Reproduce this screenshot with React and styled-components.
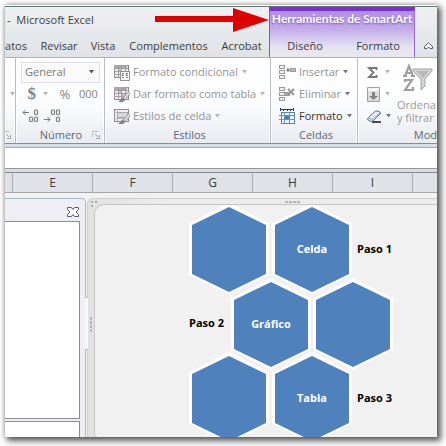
import React from "react";
import styled, { createGlobalStyle } from "styled-components";

const Global = createGlobalStyle`
  * { box-sizing: border-box; }
  html, body { margin: 0; background: #fdfdfd; }
  body { overflow: hidden; font: 12px/16px "Open Sans", "Noto Sans", sans-serif; color: #3c3c3c; }
  button, select { font: inherit; color: inherit; border: 0; background: none; padding: 0; margin: 0; white-space: nowrap; }
  h1, h2, p { margin: 0; font: inherit; }
  svg { display: block; flex: none; }
`;

const Window = styled.main`
  position: relative;
  display: flex;
  flex-direction: column;
  height: calc(100vh - 14px);
  margin: 5px 9px 9px 5px;
  overflow: hidden;
  background: #f1f1f1;
  border-top: 1px solid #fff;
`;

const Shade = styled.div`
  display: flow-root;
  &::before {
    content: "";
    position: fixed;
    inset: 5px 9px 9px 5px;
    box-shadow: 0 0 5px rgba(0, 0, 0, 0.3), 3px 3px 6px 1px rgba(0, 0, 0, 0.6);
  }
`;

const Header = styled.header`
  display: flex;
  height: 52px;
  flex: none;
  border-top: 1px solid #5d7a70;
  border-bottom: 1px solid #adb2b8;
  background: linear-gradient(#eeeff2, #e5e8eb 60%, #dfe2e6);
`;

const Bar = styled.div`
  display: flex;
  flex-direction: column;
  justify-content: space-between;
  width: 264px;
  flex: none;
`;

const Title = styled.h1`
  padding: 5px 0 0 2px;
  white-space: pre;
  font-size: 11px;
`;

const Tabs = styled.nav`
  display: flex;
  padding-bottom: 3px;
`;

const Tab = styled.button`
  width: ${(p) => p.$w}px;
  flex: none;
  height: 16px;
  display: flex;
  justify-content: center;
  font-size: 11px;
`;

const Context = styled.div`
  display: flex;
  flex-direction: column;
  justify-content: space-between;
  width: 146px;
  flex: none;
  border-top: 4px solid #7a2fd0;
  border-left: 1px solid #8b50d6;
  border-right: 1px solid #9a68da;
  background: linear-gradient(#b08ee2, #c3acea 40%, #e5e2f0 78%, #e8e9ee);
`;

const ContextTitle = styled.h2`
  text-align: center;
  color: #fff;
  font-family: Lato, sans-serif;
  font-size: 12px;
  line-height: 15px;
  font-weight: 700;
  white-space: nowrap;
  text-shadow: 0 1px 2px #7650ae;
`;

const Collapse = styled.button`
  flex: 1;
  display: flex;
  align-items: flex-end;
  justify-content: center;
  padding: 0 0 7px 4px;
`;

const Ribbon = styled.section`
  display: flex;
  height: 86px;
  flex: none;
  overflow: hidden;
  border-bottom: 1px solid #898d93;
  background: linear-gradient(#fff, #fbfcfd 55%, #e8ebf0);
`;

const Group = styled.section`
  display: flex;
  flex-direction: column;
  flex: none;
  width: ${(p) => p.$w}px;
  padding: 3px 4px 0 ${(p) => p.$pad || 4}px;
  border-right: 1px solid #b8bcc3;
  box-shadow: inset -1px 0 #fff, inset 1px 0 #fff;
  overflow: hidden;
`;

const LastGroup = styled(Group)`
  flex: 1;
  min-width: 0;
  padding-right: 0;
  border-right: 0;
  box-shadow: inset 1px 0 #fff;
`;

const Commands = styled.div`
  display: flex;
  flex-direction: column;
  height: 66px;
`;

const Line = styled.div`
  display: flex;
  align-items: center;
  height: 22px;
  gap: ${(p) => p.$gap || 0}px;
`;

const GroupName = styled.footer`
  position: relative;
  color: #5c6678;
  font-size: 11px;
  line-height: 15px;
  text-align: ${(p) => (p.$end ? "right" : "center")};
  white-space: nowrap;
`;

const Launcher = styled.button`
  position: absolute;
  right: 0;
  top: 4px;
`;

const Command = styled.button`
  display: flex;
  align-items: center;
  gap: 3px;
  height: 22px;
  font-size: 11px;
  color: ${(p) => (p.$on ? "#333" : "#949494")};
`;

const IconCommand = styled(Command)`
  width: 24px;
  justify-content: space-between;
`;

const Symbol = styled.button`
  width: ${(p) => p.$w}px;
  font-size: ${(p) => p.$size || 13}px;
  color: #858585;
  font-weight: ${(p) => (p.$bold ? 700 : 400)};
  font-family: ${(p) => (p.$serif ? '"Liberation Serif", serif' : "inherit")};
`;

const SelectBox = styled.label`
  display: flex;
  align-items: center;
  width: 80px;
  height: 21px;
  margin-left: -1px;
  padding-right: 4px;
  border: 1px solid #dfe1e6;
  background: #fafafb;
  color: #777;
`;

const Select = styled.select`
  appearance: none;
  flex: 1;
  min-width: 0;
  padding-left: 3px;
  font-size: 11px;
  outline: none;
`;

const Editing = styled.div`
  display: flex;
  gap: 6px;
`;

const Sort = styled.button`
  display: flex;
  flex-direction: column;
  align-items: flex-start;
  padding-top: 3px;
  color: #9b9b9b;
  font-size: 11px;
  line-height: 13px;
  text-align: left;
  > svg { margin: 0 0 6px 6px; }
`;

const Formula = styled.div`
  flex: none;
  height: 29px;
  padding: 3px 0 2px;
  background: #d9dde5;
  border-bottom: 1px solid #85898f;
`;

const FormulaInput = styled.input`
  display: block;
  width: 100%;
  height: 22px;
  padding: 0 4px;
  border: 0;
  border-top: 1px solid #a6aab0;
  border-bottom: 1px solid #95999f;
  border-radius: 0;
  background: #fff;
  font: inherit;
  outline: none;
`;

const Columns = styled.div`
  display: flex;
  flex: none;
  height: 20px;
  overflow: hidden;
  border-bottom: 1px solid #a3a7ac;
  background: #dfe2e7;
`;

const Column = styled.div`
  width: ${(p) => p.$w || 80}px;
  flex: none;
  border-right: 1px solid #a9adb2;
  text-align: center;
  line-height: 20px;
`;

const Sheet = styled.div`
  display: flex;
  flex: 1;
  min-height: 0;
  padding-top: 5px;
  gap: 1px;
`;

const Pane = styled.aside`
  display: flex;
  flex-direction: column;
  flex: none;
  width: 81px;
  padding-right: 5px;
  border: solid #a9bac3;
  border-width: 1px 1px 0 0;
  border-radius: 0 5px 0 0;
  background: #eeeef4;
`;

const PaneHead = styled.div`
  display: flex;
  align-items: center;
  justify-content: flex-end;
  height: 22px;
  padding: 3px 1px 0 0;
  flex: none;
`;

const PaneList = styled.div`
  flex: 1;
  background: #fff;
  border: solid #8b8b90;
  border-width: 1px 1px 1px 0;
`;

const PaneFoot = styled.div`
  height: 16px;
  margin-top: 2px;
  flex: none;
  background: #fff;
  border: solid #8b8b90;
  border-width: 1px 1px 0 0;
`;

const Frame = styled.section`
  position: relative;
  flex: 1;
  min-width: 0;
  padding: 5px 0 0 6px;
  border: solid #cfcfcf;
  border-width: 1px 0 0 1px;
  border-radius: 6px 0 0 0;
  background: linear-gradient(90deg, #e1e1e1, #ececec 80px);
`;

const Canvas = styled.div`
  position: relative;
  height: 100%;
  overflow: hidden;
  border: solid #c4c4c4;
  border-width: 1px 0 0 1px;
  border-radius: 10px 0 0 4px;
  background: #f1f1f1;
`;

const Node = styled.div`
  position: absolute;
  left: ${(p) => p.$x}px;
  top: ${(p) => p.$y}px;
  width: 80px;
  height: 92px;
  display: grid;
  place-items: center;
  > * { grid-area: 1 / 1; }
`;

const NodeText = styled.p`
  z-index: 1;
  color: #fff;
  font-size: 11px;
  font-weight: 700;
`;

const Step = styled.p`
  position: absolute;
  left: ${(p) => p.$x}px;
  top: ${(p) => p.$y}px;
  color: #000;
  font-size: 11px;
  font-weight: 700;
  white-space: nowrap;
`;

const Grip = styled.div`
  position: absolute;
  ${(p) => p.$place}
`;

const Pointer = styled.div`
  position: absolute;
  left: 150px;
  top: 2px;
`;

const Caret = ({ c = "#b5b5b5" }) => (
  <svg width="7" height="4" viewBox="0 0 7 4"><path d="M1 0h5L3.5 3.5z" fill={c} /></svg>
);

const Table = ({ kind }) => (
  <svg width="17" height="17" viewBox="0 0 17 17" shapeRendering="crispEdges">
    <path d="M1 1h14v12H1z" fill="#f0eef0" stroke="#8c888c" />
    {kind === "cell" ? (
      <>
        <path d="M1 4h14M1 10h14M4 1v12" stroke="#bcb9bc" />
        <path d="M4 4h10v5H4z" fill="#dad7da" stroke="#aaa7aa" />
      </>
    ) : (
      <>
        <path d="M1 1h13v3H1z" fill="#aaa6aa" />
        <path d="M1 4h14M1 7h14M1 10h14M5 1v12M8 1v12M12 1v12" stroke="#a19ea1" />
        <path d="M6 5h2v2H6zM9 8h3v2H9z" fill="#c9bec4" />
      </>
    )}
    {kind === "cond" ? (
      <>
        <path d="M7 7h9v9H7z" fill="#f7f7f7" stroke="#929292" />
        <path d="M11 9H9v2h2M9 13h2M15 9h-2v2h2M13 13h2" fill="none" stroke="#858585" />
      </>
    ) : (
      <g shapeRendering="auto">
        <path d="M15.5 5.5 10 12l2 2 5-6z" fill="#ddd" stroke="#8d8d8d" strokeWidth=".8" />
        <path d="M10 11.5c-2 0-2 3-5 4 3 1.500 7 .5 7-2z" fill="#858585" />
      </g>
    )}
  </svg>
);

const Cells = ({ kind }) => (
  <svg width="17" height="16" viewBox="0 0 17 16">
    <g shapeRendering="crispEdges" fill="#f0f0f0" stroke="#9b9b9b">
      <path d="M.5 1.500h5v3h-5zM.5 6.500h5v3h-5zM.5 11.500h5v3h-5z" />
      {kind === "insert" && <path d="M11.500 4.500h5v3h-5z" fill="#bbb" />}
      {kind === "delete" && <path d="M5.500 6.500h5v3h-5z" fill="#aaa" />}
    </g>
    {kind === "insert" ? (
      <path d="M7 6h4M9 4v4" stroke="#666" />
    ) : (
      <path d="m9 3 6 6m0-6L9 9" stroke="#999" strokeWidth="2" />
    )}
  </svg>
);

const FormatIcon = () => (
  <svg width="17" height="17" viewBox="0 0 17 17" shapeRendering="crispEdges">
    <path d="M1 1.500h14M1.500 0v3M14.500 0v3M4.500 1v2M8.500 1v2M11.500 1v2" stroke="#263955" />
    <path d="M2.500 4.500h13v11h-13z" fill="#f2f7ff" stroke="#5c7fae" />
    <path d="M0 7.500h16M0 11.500h16M5.500 4v12M10.500 4v12" stroke="#6f91bd" />
    <path d="M6 8h4v3H6z" fill="#2e80e8" />
  </svg>
);

const Decimal = ({ more }) => (
  <svg width="17" height="14" viewBox="0 0 17 14">
    <path d={more ? "M7 3.500H1m2.500-2.500L1 3.500 3.500 6" : "M0 10.500h6m-2.500-2.500L6 10.500 3.500 13"} fill="none" stroke="#777" />
    <g fill="none" stroke="#808080" strokeWidth="1.200">
      <rect x="12.500" y="1" width="3" height="4.500" rx="1" />
      <rect x="12.500" y="8" width="3" height="4.500" rx="1" />
      <rect x="7.500" y={more ? 8 : 1} width="3" height="4.500" rx="1" />
    </g>
  </svg>
);

const Launch = () => (
  <svg width="8" height="8" viewBox="0 0 8 8" fill="none" stroke="#b8bcc2">
    <path d="M.5 6V.5H6" />
    <path d="m3 3 3 3M7.500 4v3.500H4" stroke="#a5a5a8" />
  </svg>
);

const Fill = () => (
  <svg width="13" height="15" viewBox="0 0 13 15">
    <path d="M.5.5h12v14H.5z" fill="#dedede" stroke="#a0a0a0" />
    <path d="M1 1h11v3H1z" fill="#f4f4f4" />
    <path d="M5 5h3v4h3l-4.500 4L2 9h3z" fill="#828282" />
  </svg>
);

const Eraser = () => (
  <svg width="15" height="13" viewBox="0 0 15 13">
    <path d="M5 12h9" stroke="#111" strokeWidth="1.500" />
    <path d="M1 8 8 1.500q1-.8 2-.5l3 1q1 1 0 2L6 11q-1 1-2 .500L1 10q-1-1 0-2z" fill="#e4edfa" stroke="#56749f" />
    <path d="m1.500 8 4 1.500L13 3M5.500 9.500V11" fill="none" stroke="#8aa6cf" />
  </svg>
);

const Sigma = () => (
  <svg width="12" height="11" viewBox="0 0 12 11">
    <path d="M9.500 3V1H2l4.500 4.500L2 10h7.500V8" fill="none" stroke="#777" strokeWidth="1.800" />
  </svg>
);

const Filter = () => (
  <svg width="30" height="28" viewBox="0 0 30 28">
    <path d="M10 5h19v2l-7 8v7l-4 4V15l-8-8z" fill="#d6d6d6" stroke="#a3a3a3" />
    <path d="M13 7h13l-6 7z" fill="#bababa" />
    <g fill="none" stroke="#9f9f9f" strokeWidth="2.200">
      <path d="m2 12 4-10 4 10M3.500 9h5M0 12h4M8 12h4M2 18v-2h7L2 26h8v-3" />
    </g>
  </svg>
);

const Hexagon = () => (
  <svg width="80" height="92" viewBox="0 0 80 92">
    <path d="M40 0 80 20.500v51L40 92 0 71.500v-51z" fill="#fff" />
    <path d="M40 4 77 22v49L40 89 3 71V22z" fill="#4f81bd" />
  </svg>
);

const nodes = [
  [94, -2, ""], [177, -2, "Celda"], [136, 73, "Gráfico"],
  [218, 73, ""], [94, 147, ""], [177, 147, "Tabla"],
];
const steps = [[262, 36, "Paso 1"], [94, 110, "Paso 2"], [262, 185, "Paso 3"]];

export default function App() {
  return (
    <Shade>
      <Global />
      <Window>
        <Header>
          <Bar>
            <Title>{"-  Microsoft Excel"}</Title>
            <Tabs>
              <Tab $w={22}>atos</Tab>
              <Tab $w={64}>Revisar</Tab>
              <Tab $w={24}>Vista</Tab>
              <Tab $w={107}>Complementos</Tab>
              <Tab $w={39}>Acrobat</Tab>
            </Tabs>
          </Bar>
          <Context>
            <ContextTitle>Herramientas de SmartArt</ContextTitle>
            <Tabs>
              <Tab $w={70}>Diseño</Tab>
              <Tab $w={76}>Formato</Tab>
            </Tabs>
          </Context>
          <Collapse aria-label="Minimizar la cinta">
            <svg width="9" height="8" viewBox="0 0 9 8">
              <path d="M.5 4.500 4.500.8l4 3.700v2H6L4.500 5 3 6.500H.5z" fill="#fff" stroke="#555b65" />
            </svg>
          </Collapse>
        </Header>

        <Ribbon>
          <Group $w={11} $pad={0}>
            <Commands><Line /><Line><Caret /></Line></Commands>
            <GroupName>&nbsp;<Launcher aria-label="Alineación"><Launch /></Launcher></GroupName>
          </Group>
          <Group $w={89} $pad={6}>
            <Commands>
              <Line>
                <SelectBox>
                  <Select aria-label="Formato de número"><option>General</option></Select>
                  <Caret c="#555" />
                </SelectBox>
              </Line>
              <Line>
                <Symbol $w={20} $size={17} $bold $serif>$</Symbol>
                <Symbol $w={12} aria-label="Más formatos"><Caret /></Symbol>
                <Symbol $w={24}>%</Symbol>
                <Symbol $w={24} $size={11}>000</Symbol>
              </Line>
              <Line $gap={2}>
                <Symbol $w={20} aria-label="Aumentar decimales"><Decimal more /></Symbol>
                <Symbol $w={20} aria-label="Disminuir decimales"><Decimal /></Symbol>
              </Line>
            </Commands>
            <GroupName>Número<Launcher aria-label="Opciones de número"><Launch /></Launcher></GroupName>
          </Group>
          <Group $w={166} $pad={8}>
            <Commands>
              <Command><Table kind="cond" />Formato condicional<Caret /></Command>
              <Command><Table />Dar formato como tabla<Caret /></Command>
              <Command><Table kind="cell" />Estilos de celda<Caret /></Command>
            </Commands>
            <GroupName>Estilos</GroupName>
          </Group>
          <Group $w={87} $pad={8}>
            <Commands>
              <Command><Cells kind="insert" />Insertar<Caret c="#777" /></Command>
              <Command><Cells kind="delete" />Eliminar<Caret c="#777" /></Command>
              <Command $on><FormatIcon />Formato<Caret c="#777" /></Command>
            </Commands>
            <GroupName>Celdas</GroupName>
          </Group>
          <LastGroup $pad={9}>
            <Editing>
              <Commands>
                <IconCommand aria-label="Suma"><Sigma /><Caret /></IconCommand>
                <IconCommand aria-label="Rellenar"><Fill /><Caret /></IconCommand>
                <IconCommand aria-label="Borrar"><Eraser /><Caret c="#777" /></IconCommand>
              </Commands>
              <Sort>
                <Filter />
                <span>Ordena<br />y filtrar</span>
              </Sort>
            </Editing>
            <GroupName $end>Mod</GroupName>
          </LastGroup>
        </Ribbon>

        <Formula><FormulaInput aria-label="Barra de fórmulas" /></Formula>
        <Columns>
          <Column $w={8} />
          {["E", "F", "G", "H", "I", ""].map((c, i) => <Column key={i}>{c}</Column>)}
        </Columns>

        <Sheet>
          <Pane>
            <PaneHead>
              <button aria-label="Cerrar panel">
                <svg width="12" height="10" viewBox="0 0 12 10">
                  <path d="M.5.5h4L6 2.500 7.500.5h4v2L9 5l2.500 2.500v2h-4L6 7.500l-1.500 2h-4v-2L3 5 .5 2.500z" fill="#fff" stroke="#555e66" />
                </svg>
              </button>
            </PaneHead>
            <PaneList />
            <PaneFoot />
          </Pane>
          <Frame>
            <Grip $place="left: 2px; top: 1px;">
              <svg width="8" height="8"><path d="M1 2h2M5 2h2M1 6h2" stroke="#aaa" strokeWidth="2" /></svg>
            </Grip>
            <Grip $place="left: 197px; top: 1px;">
              <svg width="16" height="4"><path d="M0 2h16" stroke="#b5b5b5" strokeWidth="2" strokeDasharray="3 1" /></svg>
            </Grip>
            <Grip $place="left: 1px; top: 118px;">
              <svg width="4" height="16"><path d="M2 0v16" stroke="#b5b5b5" strokeWidth="2" strokeDasharray="3 1" /></svg>
            </Grip>
            <Grip $place="left: -3px; top: 98px;">
              <svg width="3" height="53"><path d="M0 0h3v53H0z" fill="#effcfd" /><path d="M0 .5h3M0 52.500h3" stroke="#b5c2c8" /></svg>
            </Grip>
            <Canvas>
              {nodes.map(([x, y, text], i) => (
                <Node key={i} $x={x} $y={y}><Hexagon />{text && <NodeText>{text}</NodeText>}</Node>
              ))}
              {steps.map(([x, y, text]) => <Step key={text} $x={x} $y={y}>{text}</Step>)}
            </Canvas>
          </Frame>
        </Sheet>
        <Pointer>
          <svg width="115" height="24" viewBox="0 0 115 24">
            <path d="M0 8h78V0l36 12-36 12v-10H0z" fill="#dc0000" />
          </svg>
        </Pointer>
      </Window>
    </Shade>
  );
}
